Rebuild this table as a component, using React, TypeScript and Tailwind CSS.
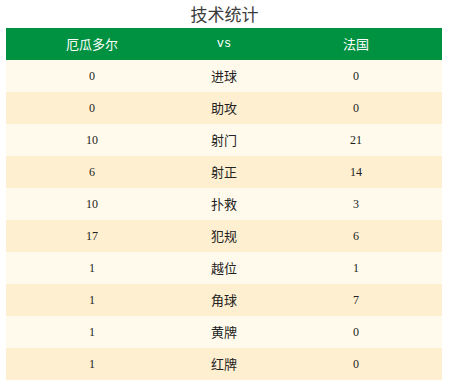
const rows: [string, string, string][] = [
  ["0", "进球", "0"],
  ["0", "助攻", "0"],
  ["10", "射门", "21"],
  ["6", "射正", "14"],
  ["10", "扑救", "3"],
  ["17", "犯规", "6"],
  ["1", "越位", "1"],
  ["1", "角球", "7"],
  ["1", "黄牌", "0"],
  ["1", "红牌", "0"],
];

export default function App() {
  return (
    <div className="w-[449px] h-[384px] bg-white font-['Liberation_Serif','Noto_Sans_CJK_SC',serif]">
      <div className="h-[28px] flex items-center justify-center text-[17px] text-[#3c3c3c] font-['Noto_Sans_CJK_SC',sans-serif]">
        技术统计
      </div>
      <div className="mx-[6px] w-[436px]">
        <div className="grid grid-cols-[172px_92px_172px] h-[32px] items-center bg-[#009240] text-white text-[12px] text-center">
          <div className="font-['Noto_Sans_CJK_SC',sans-serif] text-[13px]">厄瓜多尔</div>
          <div className="font-['Liberation_Mono',monospace]">vs</div>
          <div className="font-['Noto_Sans_CJK_SC',sans-serif] text-[13px]">法国</div>
        </div>
        {rows.map((r, i) => (
          <div
            key={r[1]}
            className={`grid grid-cols-[172px_92px_172px] h-[32px] items-center text-[12px] text-center text-[#222] ${
              i % 2 === 0 ? "bg-[#fffaec]" : "bg-[#feefd1]"
            }`}
          >
            <div>{r[0]}</div>
            <div className="font-['Noto_Sans_CJK_SC',sans-serif] text-[13px]">{r[1]}</div>
            <div>{r[2]}</div>
          </div>
        ))}
      </div>
    </div>
  );
}
